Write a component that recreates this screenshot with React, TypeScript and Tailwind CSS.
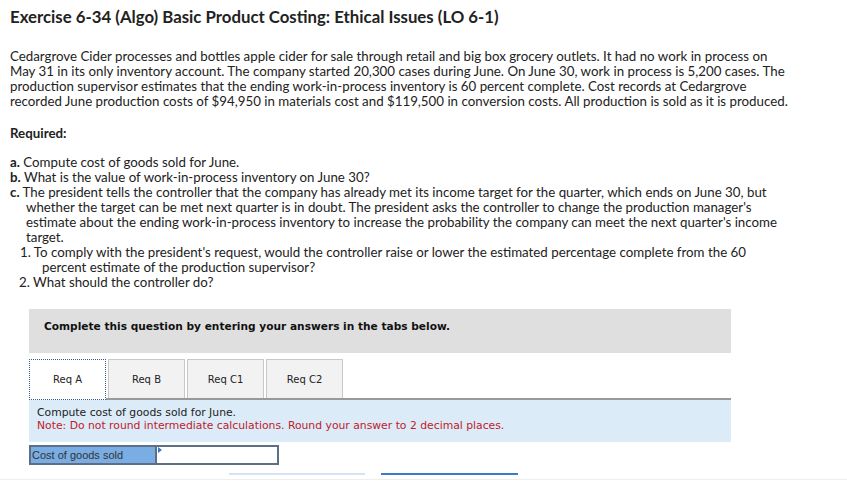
import React from 'react'

const tabs = ['Req A', 'Req B', 'Req C1', 'Req C2']

export default function App() {
  return (
    <div className="w-[847px] h-[483px] overflow-hidden bg-white text-[#222] font-['Lato',sans-serif] relative">
      <h1 className="px-[10px] pt-[6px] text-[16.8px] leading-[22px] font-bold text-[#222]">
        Exercise 6-34 (Algo) Basic Product Costing: Ethical Issues (LO 6-1)
      </h1>

      <p className="px-[10px] mt-[21px] w-[847px] text-[13.3px] leading-[15px] whitespace-nowrap">
        Cedargrove Cider processes and bottles apple cider for sale through retail and big box grocery outlets. It had no work in process on
        <br />
        May 31 in its only inventory account. The company started 20,300 cases during June. On June 30, work in process is 5,200 cases. The
        <br />
        production supervisor estimates that the ending work-in-process inventory is 60 percent complete. Cost records at Cedargrove
        <br />
        recorded June production costs of $94,950 in materials cost and $119,500 in conversion costs. All production is sold as it is produced.
      </p>

      <p className="px-[10px] mt-[17px] text-[13.3px] leading-[15px] font-bold">Required:</p>

      <div className="px-[10px] mt-[14px] text-[13.3px] leading-[15px] whitespace-nowrap">
        <p>
          <b>a.</b> Compute cost of goods sold for June.
        </p>
        <p>
          <b>b.</b> What is the value of work-in-process inventory on June 30?
        </p>
        <p className="pl-[16px] -indent-[16px]">
          <b>c.</b> The president tells the controller that the company has already met its income target for the quarter, which ends on June 30, but
          <br />
          whether the target can be met next quarter is in doubt. The president asks the controller to change the production manager's
          <br />
          estimate about the ending work-in-process inventory to increase the probability the company can meet the next quarter's income
          <br />
          target.
        </p>
        <p className="pl-[32px] -indent-[22px]">
          1. To comply with the president's request, would the controller raise or lower the estimated percentage complete from the 60
          <br />
          percent estimate of the production supervisor?
        </p>
        <p className="pl-[9px]">2. What should the controller do?</p>
      </div>

      <div className="ml-[29px] mt-[19px] w-[702px] font-['DejaVu_Sans',Verdana,sans-serif]">
        <div className="h-[44px] bg-[#dfdfdf] pl-[15px] pt-[10px] text-[10.6px] font-bold text-[#111]">
          Complete this question by entering your answers in the tabs below.
        </div>

        <div className="mt-[6px] flex gap-[2px] border-b-2 border-[#999]">
          {tabs.map((t, i) => (
            <div
              key={t}
              className={`w-[77px] flex items-center justify-center text-[10px] text-[#222] ${
                i === 0
                  ? 'bg-white border border-dotted border-[#3a5a9a] -mb-[2px] h-[41px]'
                  : 'bg-[#f2f2f2] border border-[#c8c8c8] border-b-0 h-[39px]'
              }`}
            >
              {t}
            </div>
          ))}
        </div>

        <div className="h-[42px] bg-[#dcebf8] pl-[8px] pt-[6px] text-[10.8px] leading-[13px]">
          <p className="text-[#222]">Compute cost of goods sold for June.</p>
          <p className="text-[#c0202a]">Note: Do not round intermediate calculations. Round your answer to 2 decimal places.</p>
        </div>

        <div className="mt-[3px] flex">
          <div className="w-[128px] h-[20px] bg-[#79ade3] border-2 border-[#5d6e86] text-[11px] text-[#333] flex items-center pl-[1px] font-['Liberation_Sans',Arial,sans-serif]">
            Cost of goods sold
          </div>
          <div className="relative w-[122px] h-[20px] bg-white border-2 border-l-0 border-[#5d6e86]">
            <div className="absolute left-[1px] top-0 w-0 h-0 border-t-[3px] border-b-[3px] border-l-[4px] border-t-transparent border-b-transparent border-l-[#3b78c4]" />
          </div>
        </div>
      </div>

      <div className="absolute left-[229px] top-[473px] w-[136px] h-[2px] bg-[#d6e3f3]" />
      <div className="absolute left-[381px] top-[473px] w-[137px] h-[2px] bg-[#3a7bc8]" />
      <div className="absolute left-0 top-[479px] w-full h-[1px] bg-[#eeeeee]" />
    </div>
  )
}
